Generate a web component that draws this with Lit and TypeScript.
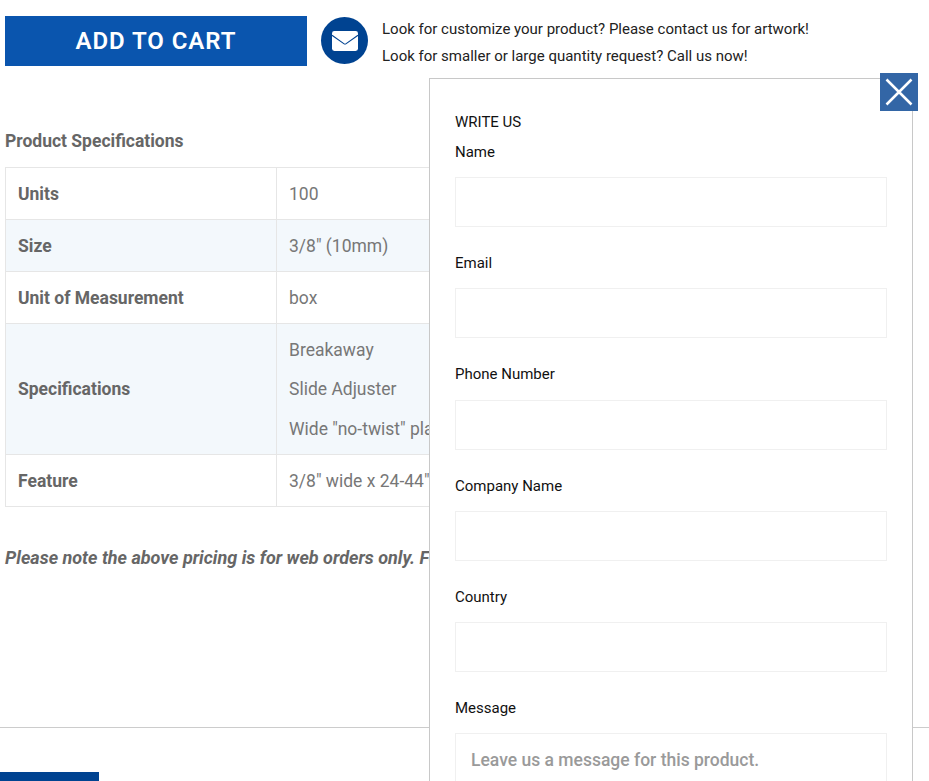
import { LitElement, html, css, svg } from "lit";
import { customElement } from "lit/decorators.js";

const ROWS: { h: string; v: string[]; tint?: boolean }[] = [
  { h: "Units", v: ["100"] },
  { h: "Size", v: ['3/8" (10mm)'], tint: true },
  { h: "Unit of Measurement", v: ["box"] },
  { h: "Specifications", v: ["Breakaway", "Slide Adjuster", 'Wide "no-twist" plastic'], tint: true },
  { h: "Feature", v: ['3/8" wide x 24-44" long'] },
];
const FIELDS = ["Name", "Email", "Phone Number", "Company Name", "Country"];

@customElement("app-root")
export class AppRoot extends LitElement {
  static styles = css`
    :host {
      display: block;
      position: relative;
      height: 781px;
      overflow: hidden;
      background: #fff;
      font-family: Roboto, "Liberation Sans", sans-serif;
      color: #666;
    }
    .page { display: flex; flex-direction: column; height: 781px; }
    .top { display: flex; align-items: center; padding: 16px 0 0 5px; height: 50px; }
    .cart {
      width: 302px; height: 50px; background: #0a55ae; color: #fff;
      display: flex; align-items: center; justify-content: center;
      font-size: 24px; font-weight: 600; letter-spacing: 0.95px;
    }
    .circle {
      width: 47px; height: 47px; border-radius: 50%; background: #004391;
      margin: -1px 0 0 14px; display: flex; align-items: center; justify-content: center;
    }
    .contact { margin-left: 14px; font-size: 15px; line-height: 27px; color: #222; margin-top: 4px; }
    .contact div { white-space: nowrap; }
    h2 { margin: 64px 0 0 5px; font-size: 17.5px; line-height: 22px; font-weight: 700; height: 37px; }
    table { border-collapse: collapse; margin-left: 5px; width: 880px; table-layout: fixed; font-size: 17.5px; }
    th, td { border: 1px solid #e6e6e6; padding: 0 12px; height: 51px; text-align: left; vertical-align: middle; }
    th { width: 246px; font-weight: 700; }
    td { font-weight: 400; color: #777; white-space: nowrap; }
    td.multi { padding-top: 7px; padding-bottom: 5px; }
    tr.tint { background: #f3f8fc; }
    td p { margin: 0; line-height: 39px; }
    td p:last-child { padding-top: 1px; }
    .note { margin: 39px 0 0 5px; font-size: 18px; line-height: 24px; font-weight: 700; font-style: italic; white-space: nowrap; }
    .rule { margin-top: 157px; border-top: 1px solid #ccc; }
    .bar { margin-top: 44px; width: 99px; height: 9px; background: #004391; flex: none; }
    .modal {
      position: absolute; left: 429px; top: 78px; height: 720px;
      background: #fff; border: 1px solid #c8c8c8; padding: 0 25px; box-sizing: content-box;
      width: 432px; color: #111;
    }
    .close {
      position: absolute; left: 880px; top: 73px; width: 38px; height: 38px; background: #3366a6;
      display: flex; align-items: center; justify-content: center;
    }
    .title { margin-top: 33px; font-size: 15px; line-height: 20px; }
    .field { display: flex; flex-direction: column; }
    label { font-size: 15px; line-height: 20px; font-weight: 400; margin-top: 26.05px; margin-bottom: 15.23px; color: #111; }
    .title + .field label { margin-top: 10px; margin-bottom: 15px; }
    .box { height: 48px; border: 1px solid #f0f0f0; }
    .area { height: 100px; border: 1px solid #f0f0f0; padding: 15px; color: #9a9a9a; font-size: 17.5px; line-height: 22px; font-weight: 500; }
  `;

  render() {
    return html`
      <div class="page">
        <div class="top">
          <div class="cart">ADD TO CART</div>
          <div class="circle">
            <svg width="26" height="20" viewBox="0 0 26 20">
              ${svg`<rect width="26" height="20" rx="2.400" fill="#fff"/><path d="M0 4.200L11.800 12.600q1.200.8 2.400 0L26 4.200" stroke="#004391" stroke-width="1.100" fill="none"/>`}
            </svg>
          </div>
          <div class="contact">
            <div>Look for customize your product? Please contact us for artwork!</div>
            <div>Look for smaller or large quantity request? Call us now!</div>
          </div>
        </div>
        <h2>Product Specifications</h2>
        <table>
          ${ROWS.map(r => html`
            <tr class=${r.tint ? "tint" : ""}>
              <th>${r.h}</th>
              ${r.v.length > 1
                ? html`<td class="multi">${r.v.map(x => html`<p>${x}</p>`)}</td>`
                : html`<td>${r.v[0]}</td>`}
            </tr>`)}
        </table>
        <div class="note">Please note the above pricing is for web orders only. For custom orders please contact us.</div>
        <div class="rule"></div>
        <div class="bar"></div>
      </div>
      <div class="modal">
        <div class="title">WRITE US</div>
        ${FIELDS.map(f => html`<div class="field"><label>${f}</label><div class="box"></div></div>`)}
        <div class="field"><label>Message</label><div class="area">Leave us a message for this product.</div></div>
      </div>
      <div class="close">
        <svg width="28" height="28" viewBox="0 0 28 28">
          ${svg`<path d="M1.500 1.500L26.500 26.500M26.500 1.500L1.500 26.500" stroke="#fff" stroke-width="2.500" fill="none"/>`}
        </svg>
      </div>
    `;
  }
}
